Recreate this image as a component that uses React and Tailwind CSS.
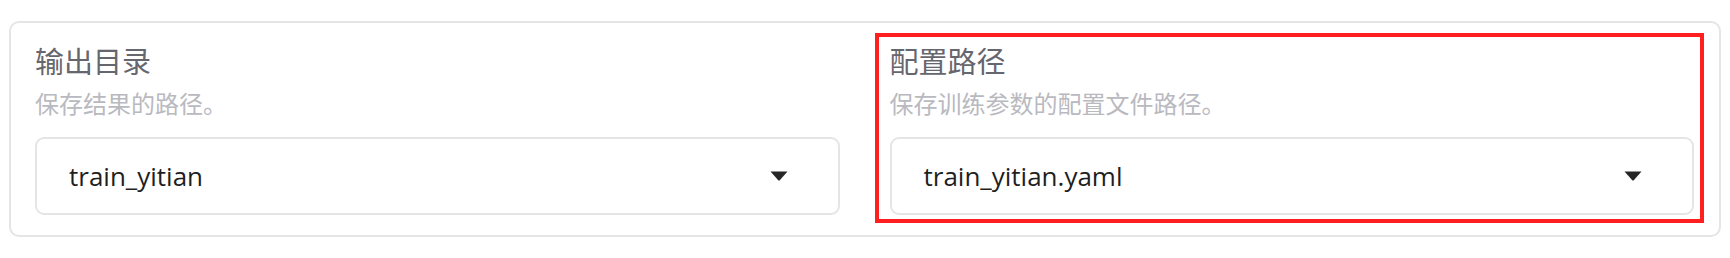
import React from 'react';

const cjk = { fontFamily: '"Noto Sans CJK SC", "Noto Sans", sans-serif' };

const Caret = () => (
  <svg width="18" height="10" viewBox="0 0 18 10" className="shrink-0">
    <path d="M0.5 0.5 H17.5 L10 9 Q9 10 8 9 Z" fill="#262626" />
  </svg>
);

const Field = ({ title, info, value }) => (
  <div className="flex flex-col">
    <div className="text-[29px] leading-[34px] text-[#66666e]" style={cjk}>
      {title}
    </div>
    <div className="mt-[11px] text-[24px] leading-[30px] text-[#b9b9c0]" style={cjk}>
      {info}
    </div>
    <div className="mt-[19px] h-[78px] rounded-[9px] border-2 border-[#e5e5e5] bg-white flex items-center pl-[32px] pr-[50px]">
      <span className="flex-1 text-[26px] text-[#1f1f1f] font-['Open_Sans',sans-serif]">{value}</span>
      <Caret />
    </div>
  </div>
);

export default function App() {
  return (
    <div className="w-[1730px] h-[258px] bg-white px-[9px] pt-[21px]">
      <div className="rounded-[10px] border-2 border-[#e5e5e5] pl-[24px] pr-[25px] pt-[20px] pb-[20px]">
        <div className="grid grid-cols-2 gap-[50px]">
          <Field title="输出目录" info="保存结果的路径。" value="train_yitian" />
          <div className="relative">
            <Field
              title="配置路径"
              info="保存训练参数的配置文件路径。"
              value="train_yitian.yaml"
            />
            {/* highlight annotation */}
            <div className="pointer-events-none absolute left-[-15px] right-[-10px] top-[-10px] bottom-[-8px] border-[4px] border-[#ff1f1f]" />
          </div>
        </div>
      </div>
    </div>
  );
}
